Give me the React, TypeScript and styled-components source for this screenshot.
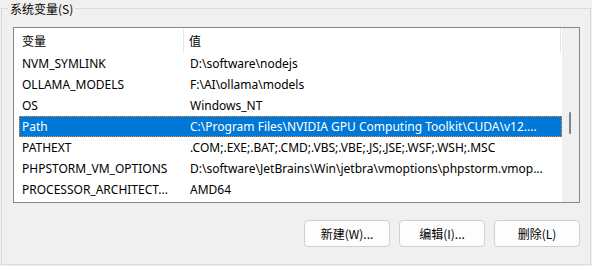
import React from "react";
import styled, { createGlobalStyle } from "styled-components";

const rows = [
  { name: "NVM_SYMLINK", value: "D:\\software\\nodejs" },
  { name: "OLLAMA_MODELS", value: "F:\\AI\\ollama\\models" },
  { name: "OS", value: "Windows_NT" },
  { name: "Path", value: "C:\\Program Files\\NVIDIA GPU Computing Toolkit\\CUDA\\v12....", selected: true },
  { name: "PATHEXT", value: ".COM;.EXE;.BAT;.CMD;.VBS;.VBE;.JS;.JSE;.WSF;.WSH;.MSC" },
  { name: "PHPSTORM_VM_OPTIONS", value: "D:\\software\\JetBrains\\Win\\jetbra\\vmoptions\\phpstorm.vmop..." },
  { name: "PROCESSOR_ARCHITECT...", value: "AMD64" },
];

const App = () => {
  return (
    <>
      <GlobalStyle />
      <Group>
        <Legend>系统变量(S)</Legend>
        <ListBox>
          <ListArea>
            <Header>
              <HeadCell>变量</HeadCell>
              <HeadCell divider>值</HeadCell>
            </Header>
            {rows.map((r) => (
              <Row key={r.name} selected={r.selected}>
                <NameCell>{r.name}</NameCell>
                <ValueCell>{r.value}</ValueCell>
              </Row>
            ))}
          </ListArea>
          <ScrollTrack>
            <ScrollThumb />
          </ScrollTrack>
        </ListBox>
        <Buttons>
          <Button>新建(W)...</Button>
          <Button>编辑(I)...</Button>
          <Button>删除(L)</Button>
        </Buttons>
      </Group>
    </>
  );
};

export default App;

const GlobalStyle = createGlobalStyle`
  html, body {
    margin: 0;
    padding: 0;
    background: #f0f0f0;
    width: 592px;
    height: 266px;
    overflow: hidden;
  }
  body {
    font-family: "Noto Sans", "Noto Sans CJK SC", sans-serif;
    font-size: 12px;
    color: #000;
  }
`;

const Group = styled.div`
  position: relative;
  box-sizing: border-box;
  margin: 8px 0 0 1px;
  width: 590px;
  height: 257px;
  border: 1px solid #dcdcdc;
  padding: 18px 11px 0 11px;
  display: flex;
  flex-direction: column;
`;

const Legend = styled.div`
  position: absolute;
  left: 6px;
  top: -9px;
  padding: 0 2px;
  line-height: 17px;
  background: #f0f0f0;
  font-family: "Noto Sans CJK SC", sans-serif;
`;

const ListBox = styled.div`
  box-sizing: border-box;
  width: 567px;
  height: 176px;
  border: 1px solid #828790;
  background: #fff;
  display: flex;
`;

const ListArea = styled.div`
  flex: 1;
  overflow: hidden;
`;

const Header = styled.div`
  display: grid;
  grid-template-columns: 169px 1fr;
  height: 25px;
  align-items: center;
  margin-right: 1px;
  border-right: 1px solid #e5e5e5;
  box-sizing: border-box;
`;

const HeadCell = styled.div<{ divider?: boolean }>`
  display: flex;
  align-items: center;
  padding-left: ${(p) => (p.divider ? "5px" : "8px")};
  border-left: ${(p) => (p.divider ? "1px solid #e5e5e5" : "none")};
  font-family: "Noto Sans CJK SC", sans-serif;
  height: 23px;
`;

const Row = styled.div<{ selected?: boolean }>`
  box-sizing: border-box;
  display: grid;
  grid-template-columns: 164px 1fr;
  margin-left: 5px;
  height: 21px;
  align-items: center;
  white-space: nowrap;
  overflow: hidden;
  background: ${(p) => (p.selected ? "#0078d7" : "transparent")};
  color: ${(p) => (p.selected ? "#fff" : "#000")};
  border: 1px dotted ${(p) => (p.selected ? "#ff8728" : "transparent")};
`;

const NameCell = styled.div`
  padding-left: 2px;
  overflow: hidden;
`;

const ValueCell = styled.div`
  padding-left: 6px;
  overflow: hidden;
`;

const ScrollTrack = styled.div`
  width: 17px;
  background: #f0f0f0;
  position: relative;
`;

const ScrollThumb = styled.div`
  position: absolute;
  left: 7px;
  top: 84px;
  width: 2px;
  height: 22px;
  border-radius: 1px;
  background: #858585;
`;

const Buttons = styled.div`
  display: flex;
  justify-content: flex-end;
  gap: 9px;
  margin-top: 17px;
  width: 567px;
`;

const Button = styled.button`
  box-sizing: border-box;
  width: 86px;
  height: 27px;
  border: 1px solid #d0d0d0;
  border-radius: 4px;
  background: #fdfdfd;
  font-family: "Noto Sans CJK SC", sans-serif;
  font-size: 12px;
  color: #000;
  padding: 0;
`;
